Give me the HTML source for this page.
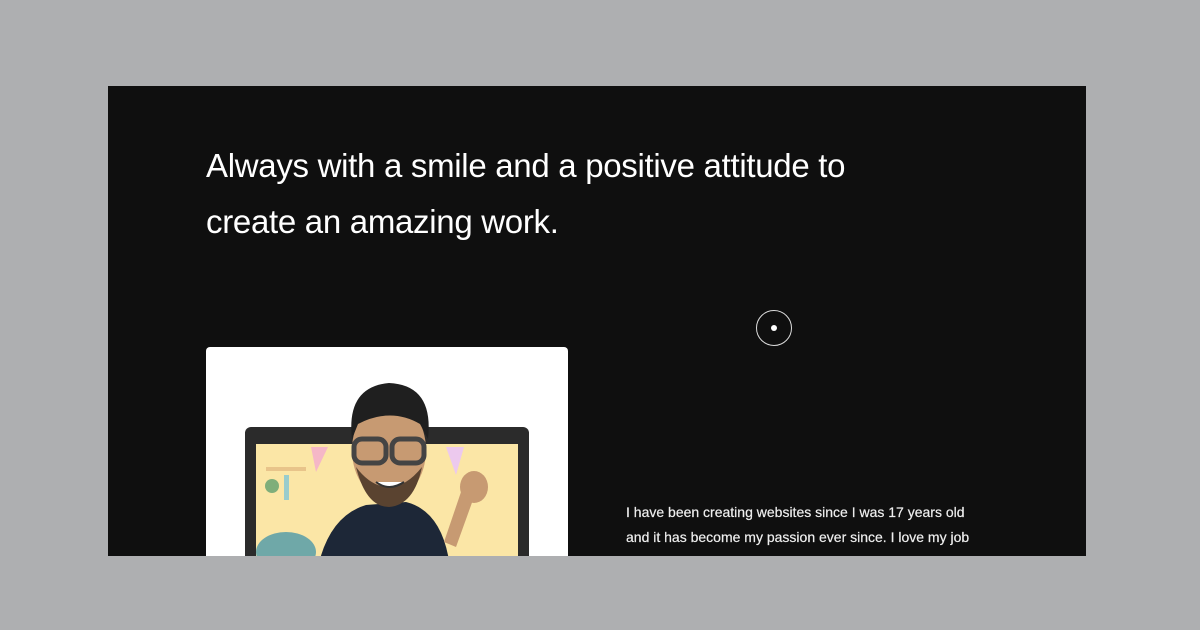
<!DOCTYPE html>
<html><head><style>
body{margin:0;width:1200px;height:630px;background:#aeafb1;position:relative;overflow:hidden;font-family:"Liberation Sans",sans-serif}
.p{position:absolute;left:108px;top:86px;width:978px;height:470px;background:#0f0f0f;overflow:hidden}
h1{position:absolute;left:98px;top:52px;margin:0;color:#fff;font-weight:400;font-size:33px;line-height:56px;letter-spacing:-0.3px;width:700px}
.dot{position:absolute;left:648px;top:224px;width:34px;height:34px;border:1px solid #ddd;border-radius:50%}
.dot:after{content:"";position:absolute;left:14px;top:14px;width:6px;height:6px;background:#fff;border-radius:50%}
.card{position:absolute;left:98px;top:261px;width:362px;height:230px;background:#fff;border-radius:4px}
.t{position:absolute;left:518px;top:414px;color:#eee;font-size:14px;line-height:25px;width:362px;-webkit-text-stroke:0.2px #eee}
</style></head><body>
<div class="p">
<h1>Always with a smile and a positive attitude to create an amazing work.</h1>
<div class="dot"></div>
<div class="card">
<svg width="362" height="230" viewBox="0 0 362 230">
<rect x="39" y="80" width="284" height="160" rx="6" fill="#2b2b2b"/>
<rect x="50" y="97" width="262" height="140" fill="#fbe6a6"/>
<polygon points="105,100 122,100 110,125" fill="#f5b7c7"/>
<polygon points="240,100 258,100 250,128" fill="#ecc9ee"/>
<rect x="60" y="120" width="40" height="4" fill="#e8c48a"/>
<circle cx="66" cy="139" r="7" fill="#7fae7a"/>
<rect x="78" y="128" width="5" height="25" fill="#9cc"/>
<ellipse cx="80" cy="205" rx="30" ry="20" fill="#6fa8a8"/>
<path d="M110 230 Q120 170 160 158 L200 155 Q240 165 245 230Z" fill="#1d2737"/>
<path d="M238 195 L255 145 L268 150 L250 200Z" fill="#c79a72"/>
<ellipse cx="268" cy="140" rx="14" ry="16" fill="#c79a72"/>
<ellipse cx="183" cy="103" rx="37" ry="50" fill="#c79a72"/>
<path d="M146 92 Q140 40 183 36 Q228 38 222 92 L214 77 Q185 60 152 77Z" fill="#1f1f1f"/>
<path d="M150 120 Q160 160 183 160 Q208 158 216 120 Q200 140 183 140 Q165 140 150 120Z" fill="#5a4330"/>
<rect x="148" y="92" width="32" height="24" rx="8" fill="none" stroke="#444" stroke-width="5"/>
<rect x="186" y="92" width="32" height="24" rx="8" fill="none" stroke="#444" stroke-width="5"/>
<path d="M170 135 Q183 145 198 135" fill="#fff" stroke="#333" stroke-width="2"/>
</svg>
</div>
<div class="t">I have been creating websites since I was 17 years old and it has become my passion ever since. I love my job and every project is a new opportunity to learn.</div>
</div>
</body></html>
